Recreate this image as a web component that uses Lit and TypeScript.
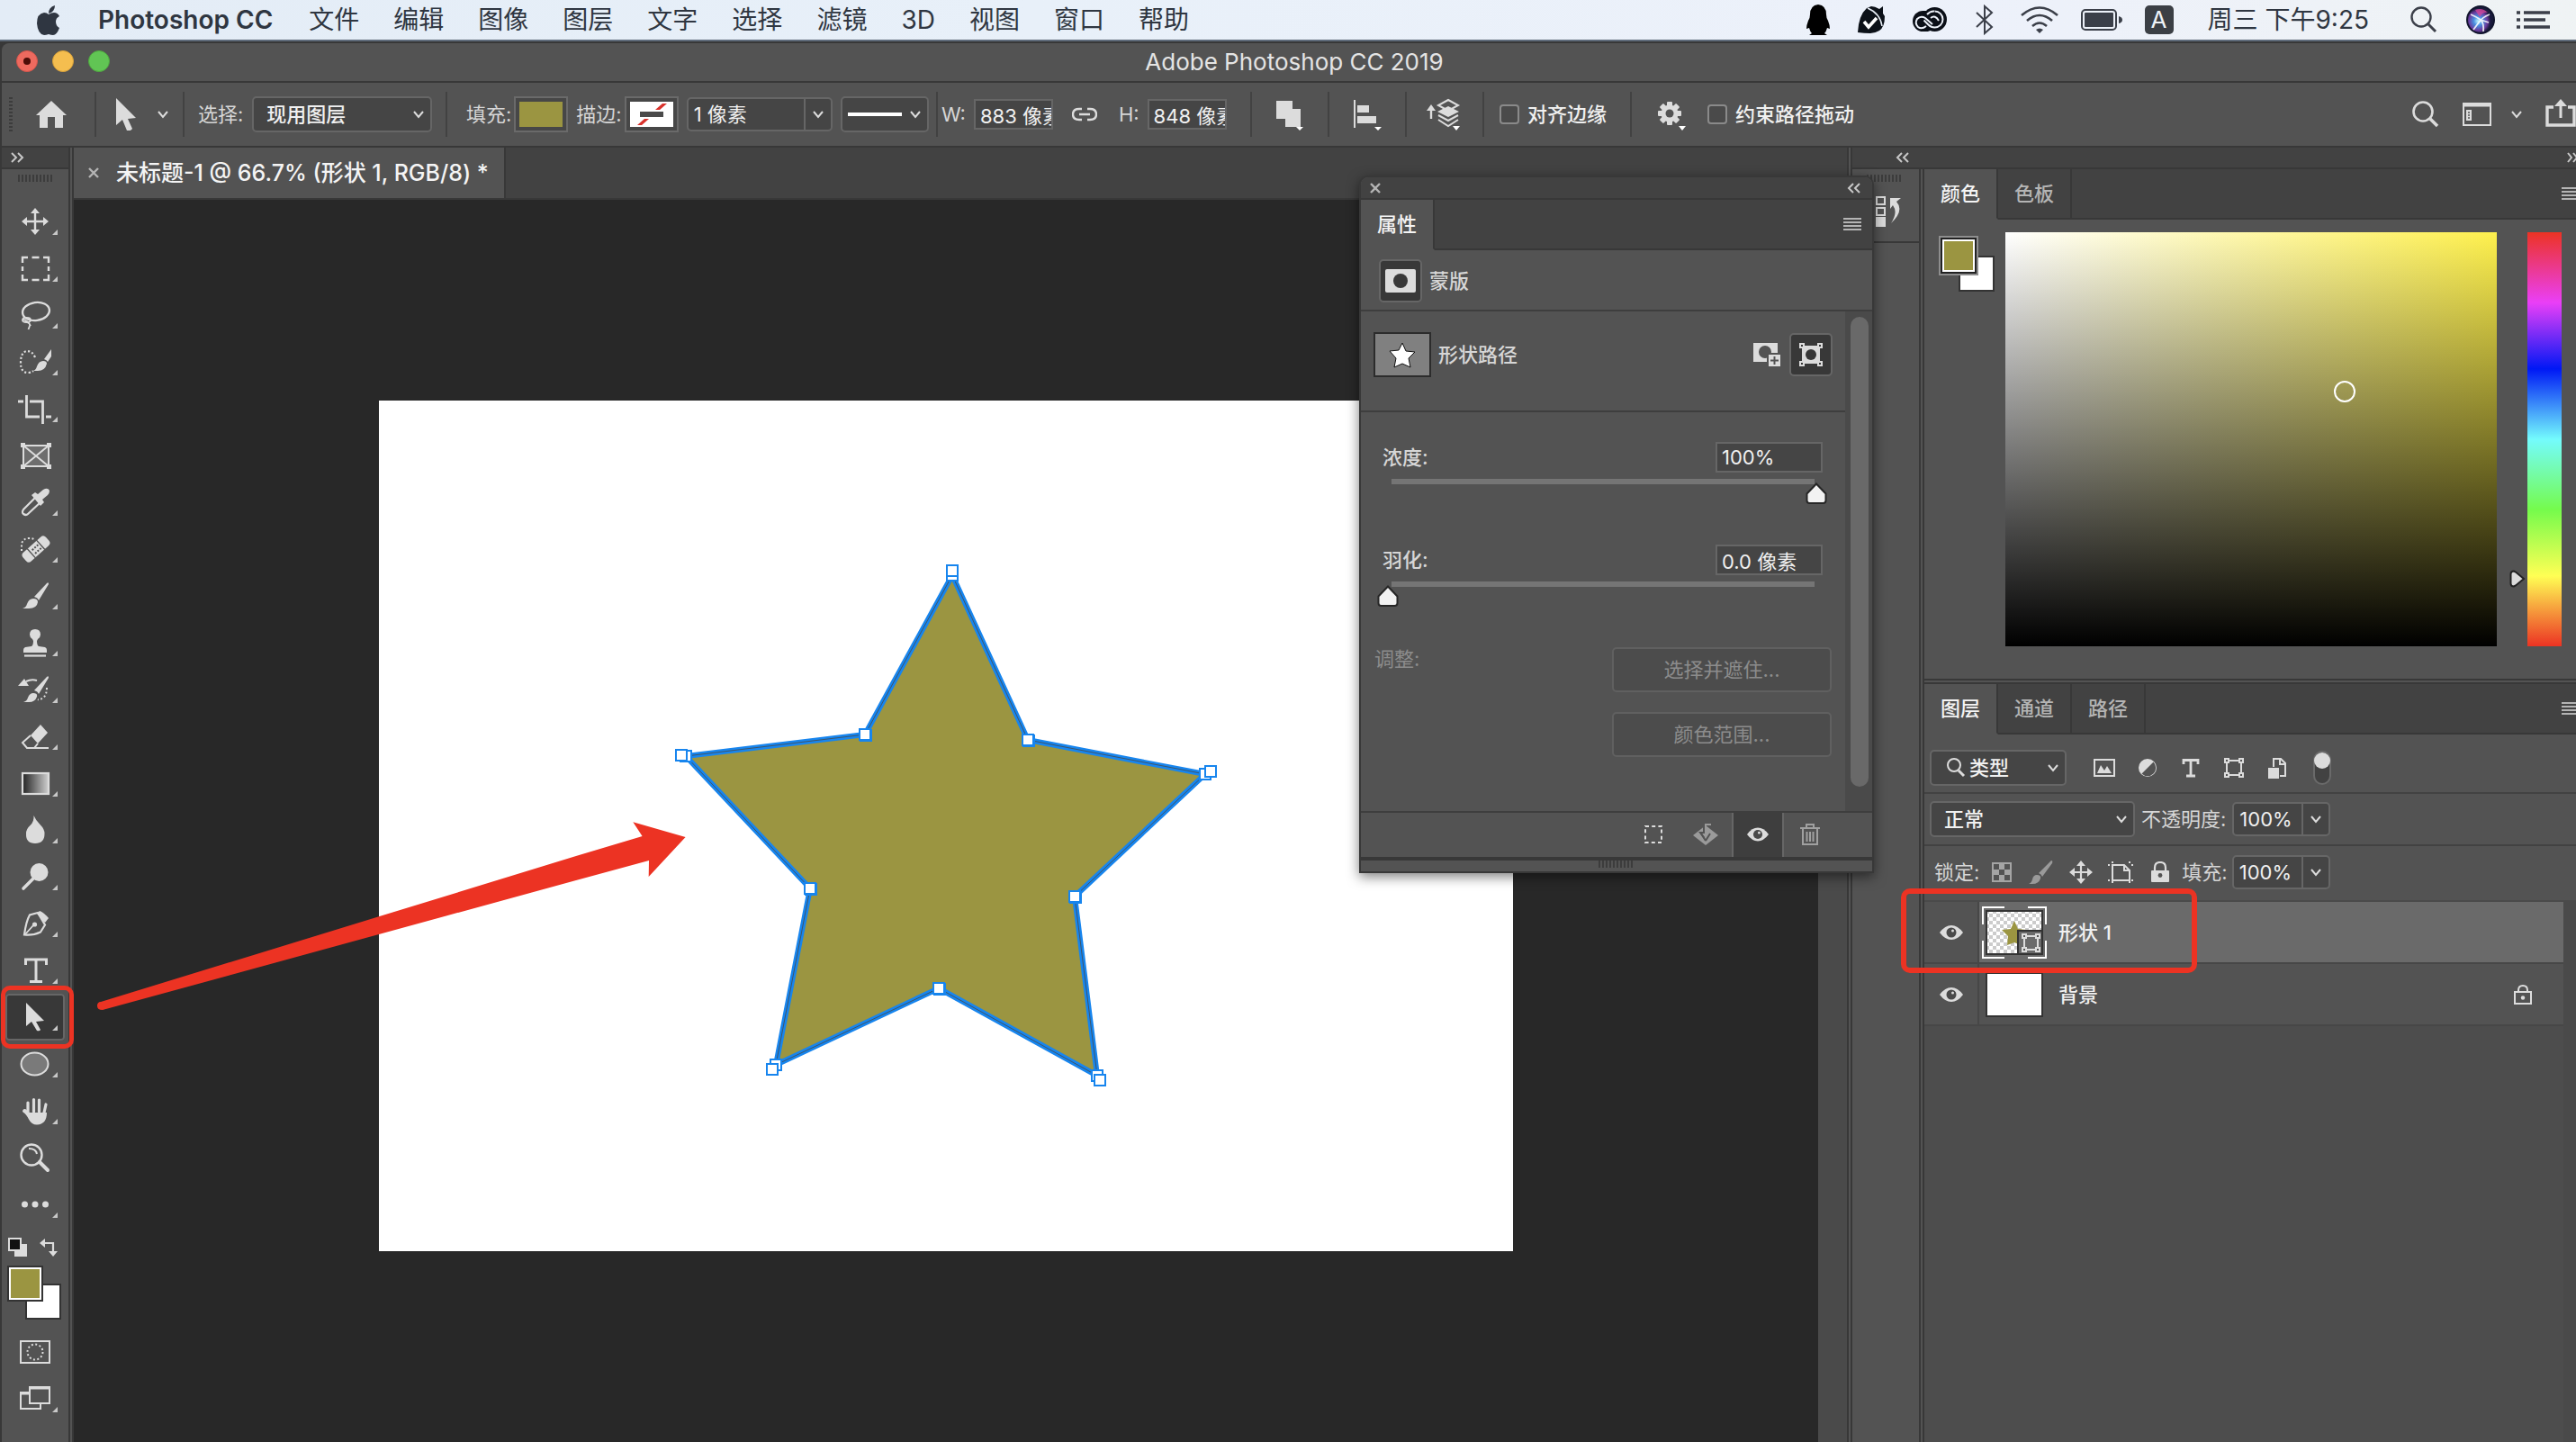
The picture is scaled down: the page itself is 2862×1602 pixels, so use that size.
import { LitElement, html, svg, css, TemplateResult, SVGTemplateResult } from "lit";
import { customElement, property, state } from "lit/decorators.js";
import { classMap } from "lit/directives/class-map.js";
import { styleMap } from "lit/directives/style-map.js";

const LIGHT = "#dcdcdc";

/** Wraps drawing content in an svg whose user units are screen pixels. */
const icon = (w: number, h: number, body: SVGTemplateResult): TemplateResult =>
  html`<svg width=${w} height=${h} viewBox="0 0 ${w} ${h}" fill="none" aria-hidden="true">${body}</svg>`;

const chevron = () => icon(14, 10, svg`<path d="M2 2l5 6 5-6" stroke="#dcdcdc" stroke-width="2"/>`);
const doubleRight = () => icon(16, 12, svg`<path d="M2 1l5 5-5 5M9 1l5 5-5 5" stroke="#c8c8c8" stroke-width="2"/>`);
const doubleLeft = () => icon(16, 12, svg`<path d="M7 1L2 6l5 5M14 1L9 6l5 5" stroke="#c8c8c8" stroke-width="2"/>`);
const closeX = () => icon(14, 14, svg`<path d="M2 2l10 10M12 2L2 12" stroke="#b4b4b4" stroke-width="2.4"/>`);
const burger = () => icon(20, 16, svg`<path d="M0 2h20M0 6h20M0 10h20M0 14h20" stroke="#b4b4b4" stroke-width="2"/>`);
const grip = (n: number, h = 8) =>
  icon(n * 4, h, svg`${Array.from({ length: n }, (_, i) => svg`<rect x=${i * 4} width="2" height=${h} fill="#3c3c3c"/>`)}`);

const cursorPath = "M0 0v30l7-6 5 12q4 1 6-2l-5-11 9-1z";

const moveIcon = svg`<path d="M33 15v22M22 26h22" stroke=${LIGHT} stroke-width="2.4"/>
  <path d="M33 11l5 6H28zM33 41l5-6H28zM18 26l6-5v10zM48 26l-6-5v10z" fill=${LIGHT}/>`;

const brushTip = svg`<path d="M19 40q4-1 5-5 2-6 7-6 5 0 5 4-1 7-10 7z" fill=${LIGHT}/>
  <path d="M32 27L46 12q2-2 2 1L37 31q-1-3-5-4z" fill=${LIGHT}/>`;

interface Tool {
  label: string;
  art: SVGTemplateResult;
  more: boolean;
}

const tools: Tool[] = [
  { label: "移动工具", more: true, art: moveIcon },
  {
    label: "矩形选框工具", more: true,
    art: svg`<path d="M19 20v-6h6M42 14h6v6M48 33v6h-6M25 39h-6v-6M29.500 14h8M29.500 39h8M19 24v5M48 24v5" stroke=${LIGHT} stroke-width="2.4"/>`,
  },
  {
    label: "套索工具", more: true,
    art: svg`<ellipse cx="34" cy="22" rx="15" ry="10" transform="rotate(-8 34 22)" stroke=${LIGHT} stroke-width="2.400"/>
      <ellipse cx="23.500" cy="31.500" rx="4.500" ry="2.500" stroke=${LIGHT} stroke-width="1.800"/>
      <path d="M20 31q8 3 7 7l-1.500 4M24 34q3 1 4 4" stroke=${LIGHT} stroke-width="1.800"/>`,
  },
  {
    label: "快速选择工具", more: true,
    art: svg`<path d="M33 21q-3-7-9-7-7 1-7 13 0 11 8 11 4 0 6-2" stroke=${LIGHT} stroke-width="2.200" stroke-dasharray="2.200 2.200"/>
      <path d="M31 36q3-1 4-5 2-6 7-6 4 0 4 3-2 8-10 8zM43 23l8-11v8l-4 6q-1-2-4-3z" fill=${LIGHT}/>`,
  },
  {
    label: "裁剪工具", more: true,
    art: svg`<path d="M14 18h6M23.500 11v24H38M45 35h6M27 18h14.500v25" stroke=${LIGHT} stroke-width="2.800"/>`,
  },
  {
    label: "图框工具", more: false,
    art: svg`<rect x="20" y="15" width="28" height="23" fill="#6e6e6e" stroke=${LIGHT} stroke-width="2"/>
      <path d="M20 15l28 23M48 15L20 38" stroke=${LIGHT} stroke-width="2"/>
      <path d="M17 12h5v5h-5zM46 12h5v5h-5zM17 36h5v5h-5zM46 36h5v5h-5z" fill=${LIGHT}/>`,
  },
  {
    label: "吸管工具", more: true,
    art: svg`<path d="M33 21L20 34q-2 3 0 5 3 2 5 0l14-13" stroke=${LIGHT} stroke-width="2.200"/>
      <path d="M29 18l4-3 3 2 6-5q5-3 7 1 0 3-2 5l-6 5 2 3-4 4z" fill=${LIGHT}/>`,
  },
  {
    label: "污点修复画笔工具", more: true,
    art: svg`<path d="M18 28v-8q2-6 8-6 5 0 7 2" stroke=${LIGHT} stroke-width="2" stroke-dasharray="2 2.400"/>
      <g transform="rotate(-42 34 26)"><rect x="17" y="19.500" width="34" height="13" rx="4" fill=${LIGHT}/>
      <path d="M27 19v14M41 19v14" stroke="#535353" stroke-width="1.400"/>
      <path d="M30 23h2v2h-2zM33.500 23h2v2h-2zM37 23h2v2h-2zM30 28h2v2h-2zM33.500 28h2v2h-2zM37 28h2v2h-2z" fill="#535353"/></g>`,
  },
  { label: "画笔工具", more: true, art: brushTip },
  {
    label: "仿制图章工具", more: true,
    art: svg`<path d="M27 17q0-6 6-6t6 6q0 3-3 5l-1 2q0 5 2 6l7 1q2 1 2 3v3H20v-3q0-2 2-3l7-1q2-1 2-6l-1-2q-3-2-3-5z" fill=${LIGHT}/>
      <path d="M21 40.500h24" stroke=${LIGHT} stroke-width="2.200"/>`,
  },
  {
    label: "历史记录画笔工具", more: true,
    art: svg`<path d="M23 17q6-3 12-1" stroke=${LIGHT} stroke-width="2"/>
      <path d="M14 22l7-8 5 8z" fill=${LIGHT}/>
      <path d="M20 40q4-1 5-5 2-5 6-5 5 0 4 4-2 6-9 6zM32 27L46 12q2-2 2 1L37 31q-1-3-5-4z" fill=${LIGHT}/>
      <path d="M46 24q0 8-4 11t-6 2" stroke=${LIGHT} stroke-width="2" stroke-dasharray="2 2.400"/>`,
  },
  {
    label: "橡皮擦工具", more: true,
    art: svg`<path d="M28 25L39 13l8 9-11 12z" fill=${LIGHT}/>
      <path d="M28 25l-9 8 5 6h8l4-5" stroke=${LIGHT} stroke-width="2"/><path d="M24 39h24" stroke=${LIGHT} stroke-width="2"/>`,
  },
  {
    label: "渐变工具", more: true,
    art: svg`<defs><linearGradient id="bw"><stop stop-color="#222"/><stop offset="1" stop-color="#d0d0d0"/></linearGradient></defs>
      <rect x="19" y="15" width="29" height="23" fill="url(#bw)" stroke=${LIGHT} stroke-width="2.200"/>`,
  },
  {
    label: "模糊工具", more: true,
    art: svg`<path d="M31.500 10q2 5 7 10 5 5 5 10 0 11-10.500 11T23 30q0-5 4.500-9t4-11z" fill=${LIGHT}/>`,
  },
  {
    label: "减淡工具", more: true,
    art: svg`<ellipse cx="37.500" cy="21" rx="10" ry="10" fill=${LIGHT}/><path d="M31 28L20 39" stroke=${LIGHT} stroke-width="3.600" stroke-linecap="round"/>`,
  },
  {
    label: "钢笔工具", more: true,
    art: svg`<path d="M36 14l-9 2.500q-4 7-6 22 10 1 18-3l5-8z" stroke=${LIGHT} stroke-width="2.200"/>
      <path d="M35 15l3-3q4 1 10 8l-4 5z" fill=${LIGHT}/><path d="M22 38l9-10" stroke=${LIGHT} stroke-width="1.800"/><circle cx="32.500" cy="27" r="2.600" fill=${LIGHT}/>`,
  },
  {
    label: "横排文字工具", more: true,
    art: svg`<path d="M22.500 20v-6h23v6M34 14v24M27 38.500h14" stroke=${LIGHT} stroke-width="3"/>`,
  },
  {
    label: "路径选择工具", more: true,
    art: svg`<path d="M23 10v26l6-5 6 10q3 1 4-1l-5-9 9-1z" fill=${LIGHT}/>`,
  },
  {
    label: "椭圆工具", more: true,
    art: svg`<ellipse cx="32.500" cy="26" rx="15" ry="12.500" fill="#7a7a7a" stroke=${LIGHT} stroke-width="2"/>`,
  },
  {
    label: "抓手工具", more: true,
    art: svg`<path d="M24 28V17M30.500 27V13.500M36.500 27V14M42 28l2-9" transform="translate(1 0)" stroke=${LIGHT} stroke-width="3.200" stroke-linecap="round"/>
      <path d="M19.500 25q2-2 4 0l3 3h19.500q0 13-11 13.500-6 0-9-6-3-6-6.500-8-1-1 0-2.500z" fill=${LIGHT}/>`,
  },
  {
    label: "缩放工具", more: false,
    art: svg`<circle cx="29" cy="23" r="11.500" stroke=${LIGHT} stroke-width="2.400"/><path d="M26 16q8 0 9 6" stroke=${LIGHT} stroke-width="2"/>
      <path d="M38 31l9 9" stroke=${LIGHT} stroke-width="4" stroke-linecap="round"/>`,
  },
  {
    label: "编辑工具栏", more: true,
    art: svg`<circle cx="21.500" cy="26" r="3.500" fill=${LIGHT}/><circle cx="33" cy="26" r="3.500" fill=${LIGHT}/><circle cx="44.500" cy="26" r="3.500" fill=${LIGHT}/>`,
  },
];

const moreMark = svg`<path d="M58 35v6h-6z" fill="#c8c8c8"/>`;

const menus = ["文件", "编辑", "图像", "图层", "文字", "选择", "滤镜", "3D", "视图", "窗口", "帮助"];

/* Anchor points of the star, in artboard pixels. Outer points also carry the position of their trailing handle. */
const starPoints: [number, number, number?, number?][] = [
  [637, 194, 637, 189],
  [721, 377],
  [918, 415, 924, 412],
  [773, 551],
  [798, 750, 801, 755],
  [622, 653],
  [441, 738, 437, 743],
  [479, 542],
  [341, 395, 336, 394],
  [540, 371],
];

const eye = (w = 26) =>
  html`<svg width=${w} height="16" viewBox="0 0 26 16" aria-hidden="true"><path d="M0 8q6-8 13-8t13 8q-6 8-13 8T0 8z" fill="#dcdcdc"/>
    <circle cx="13" cy="8" r="5.500" fill="#4a4a4a"/><circle cx="14.500" cy="6" r="1.500" fill="#dcdcdc"/></svg>`;

const frameShape = (x: number, y: number, w: number, h: number) => svg`
  <rect x=${x} y=${y} width=${w} height=${h} stroke=${LIGHT} stroke-width="2"/>
  ${[[x, y], [x + w, y], [x, y + h], [x + w, y + h]].map(
    ([cx, cy]) => svg`<rect x=${cx - 2} y=${cy - 2} width="4" height="4" fill="#535353" stroke=${LIGHT} stroke-width="2"/>`)}`;

const shared = css`
  * { box-sizing: border-box; }
  svg { display: block; flex: none; }
  button {
    font: inherit; color: inherit; background: none; border: 0; padding: 0; margin: 0;
    display: flex; align-items: center; justify-content: center; flex: none;
  }
  input, select { font: inherit; color: #f0f0f0; margin: 0; border-radius: 0; outline: 0; }
  .field { background: #454545; border: 2px solid #666; height: 34px; padding: 0 0 0 5px; min-width: 0; font-weight: 400; }
  .combo { display: flex; background: #454545; border: 2px solid #666; border-radius: 5px; height: 38px; }
  .combo input { background: none; border: 0; border-right: 2px solid #666; padding: 0 0 0 6px; min-width: 0; flex: 1; }
  .combo button { width: 28px; }
  .pick { display: grid; justify-content: stretch; background: #454545; border: 2px solid #666; border-radius: 5px; height: 40px; align-items: center; }
  .pick > * { grid-area: 1 / 1; }
  .pick select { appearance: none; background: none; border: 0; width: 100%; height: 100%; padding: 0 0 0 14px; font-weight: 500; }
  .pick > svg { pointer-events: none; }
  .pick .drop { justify-self: end; margin-right: 6px; }
  .tabs { display: flex; height: 56px; background: #424242; }
  .tabs .tab { width: 82px; border-right: 2px solid #383838; border-bottom: 2px solid #383838; color: #b4b4b4; font-weight: 500; }
  .tabs .tab.on { background: #535353; border-bottom-color: #535353; color: #f4f4f4; }
  .tabs .rest { flex: 1; display: flex; align-items: center; justify-content: flex-end; border-bottom: 2px solid #383838; }
`;

@customElement("mac-menubar")
export class MacMenubar extends LitElement {
  static styles = [shared, css`
    :host {
      display: flex; align-items: center; justify-content: space-between; height: 46px; padding: 0 28px 0 40px;
      background: linear-gradient(90deg, #e3ecf6, #e8f0f9 40%, #edf1fa 80%, #eff3f4); border-bottom: 2px solid #5f6b7a; color: #2f3641;
      font-size: 28px; line-height: 44px;
    }
    nav, .status { display: flex; align-items: center; }
    nav { gap: 38px; }
    a { color: inherit; text-decoration: none; }
    .app { font-weight: 600; margin: 0 2px 0 4px; }
    .ime { width: 32px; height: 32px; border-radius: 5px; background: #3b3f45; color: #eef2f6; line-height: 32px; text-align: center; font-size: 26px; }
    .icons { display: flex; align-items: center; gap: 24px; }
    .lens { margin-right: 8px; }
    .wide { gap: 31px; }
    .status { gap: 38px; }
    .clock { margin-right: 8px; }
    .mid { display: flex; align-items: center; gap: 25px; }
  `];

  render() {
    return html`
      <nav aria-label="菜单栏">
        ${icon(27, 34, svg`<path d="M21 0q0 7-7 9 0-7 7-9zM14 10q3-2 6-2 4 0 6 4-4 2-4 6 0 5 4 7-3 8-7 8-2 0-5-1-3 1-5 1-7-1-8-13 0-11 8-12 3 0 5 2z" fill="#2f3641" transform="translate(0 1)"/>`)}
        <a class="app" href="#app">Photoshop CC</a>
        ${menus.map((m) => html`<a href="#${m}">${m}</a>`)}
      </nav>
      <div class="status">
        <div class="mid">
          <div class="icons wide">
            ${icon(26, 34, svg`<path d="M13 0q9 1 9 11 0 4 2 7 2 5 2 9l-3-1q-1 4-3 6l3 2H3l3-2q-2-2-3-6l-3 1q0-4 2-9 2-3 2-7Q4 1 13 0z" fill="#000"/>`)}
            ${icon(30, 30, svg`<path d="M0 29Q1 10 10 2l5-2q4 0 9 3l4-3v8l2 3q0 12-6 16-5 3-10 3-7 0-14-1z" fill="#0c1118"/>
              <path d="M11 2q14 6 16 20" stroke="#e8eef6" stroke-width="1.600"/><path d="M7 17l5 6 9-10" stroke="#fff" stroke-width="3.600"/>`)}
            ${icon(38, 28, svg`<rect x="0" y="4" width="26" height="23" rx="11.500" fill="#0b0f17"/><circle cx="24.500" cy="13.500" r="13.500" fill="#0b0f17"/>
              <path d="M24.500 4.500a9 9 0 1 1 0 18q-4 0-7-3l-5-5M22 19l-8-7q-5-3-9 1-3 5 1 9 4 3 9-1M16 8q4-4 8-3.500" stroke="#eef2fa" stroke-width="2"/>
              <path d="M20 12q5-4 9 3" stroke="#eef2fa" stroke-width="2"/>`)}
          </div>
          ${icon(32, 34, svg`<path d="M8 9l17 16-8 7V2l8 7L8 25" stroke="#3b3f49" stroke-width="2"/>`)}
          ${icon(42, 30, svg`<path d="M1 10q20-17 40 0M7 16q14-12 28 0M13 22q8-7 16 0" stroke="#3b3f49" stroke-width="2.600"/><path d="M17 26q4-3 8 0l-4 4z" fill="#3b3f49"/>`)}
          ${icon(46, 24, svg`<rect x="1" y="1" width="38" height="22" rx="4" stroke="#3b3f49" stroke-width="2"/><rect x="4" y="4" width="32" height="16" rx="1" fill="#3b3f49"/><path d="M42 8q4 1 4 4t-4 4z" fill="#3b3f49"/>`)}
          <span class="ime">A</span>
        </div>
        <span class="clock">周三 下午9:25</span>
        <div class="icons">
          <button class="lens" aria-label="聚焦搜索">${icon(30, 30, svg`<circle cx="12" cy="12" r="10.500" stroke="#3b3f49" stroke-width="2.400"/><path d="M20 20l8 8" stroke="#3b3f49" stroke-width="3"/>`)}</button>
          ${icon(32, 32, svg`<defs><radialGradient id="siri" cx=".4" cy=".55"><stop stop-color="#bff6ff"/><stop offset=".35" stop-color="#4a8fe0"/><stop offset=".75" stop-color="#6a3a9c"/><stop offset="1" stop-color="#191a3c"/></radialGradient></defs>
            <circle cx="16" cy="16" r="16" fill="#10142c"/><circle cx="16" cy="16" r="14" fill="url(#siri)"/>
            <path d="M10 5q8-3 14 3-6-1-9 5z" fill="#d2479c" opacity=".8"/>
            <path d="M5 10q7 3 11 6 4 4 3 13M26 10q-8 3-12 9l-6 8M16 16l9 3" stroke="#fff" stroke-width="1.800" opacity=".85"/>`)}
          ${icon(38, 22, svg`<path d="M0 3h4M8 3h29M0 11h4M8 11h24M0 19h4M8 19h29" stroke="#3b3f49" stroke-width="3.400"/>`)}
        </div>
      </div>`;
  }
}

@customElement("options-bar")
export class OptionsBar extends LitElement {
  static styles = [shared, css`
    :host {
      display: grid; grid-template-columns: 105px 98px 292px 545px 349px 86px 86px 86px 164px auto 1fr;
      align-items: center; height: 72px; background: #535353; border-bottom: 2px solid #383838; color: #d6d6d6; font-size: 22px;
    }
    .group { display: flex; align-items: center; height: 50px; border-right: 2px solid #424242; white-space: nowrap; }
    .first { padding-left: 8px; gap: 26px; }
    .cursor { padding-left: 22px; gap: 23px; }
    .choose { padding-left: 15px; gap: 10px; }
    .choose .pick { width: 200px; }
    .fill { padding-left: 21px; gap: 9px; }
    .swatch { width: 60px; height: 40px; border: 2px solid #6a6a6a; background: #474747; margin-left: -6px; }
    .swatch i { width: 48px; height: 28px; background: #9b9541; }
    .fill .combo { width: 162px; }
    .line { width: 98px; }
    .line .stroke { margin-left: 6px; }
    .size { padding-left: 4px; gap: 9px; }
    .size .field { width: 88px; }
    .size button { width: 44px; margin: 0 7px 0 4px; }
    .center { justify-content: center; }
    .check { padding-left: 17px; gap: 9px; color: #f0f0f0; font-weight: 500; }
    .check label { display: flex; align-items: center; gap: 9px; }
    .check input { appearance: none; width: 22px; height: 22px; border: 2px solid #8a8a8a; border-radius: 4px; background: #4a4a4a; }
    .end { border: 0; gap: 22px; padding-left: 28px; }
    .right { justify-content: flex-end; gap: 25px; border: 0; }
    .right .space { gap: 20px; }
  `];

  render() {
    return html`
      <div class="group first">
        ${icon(4, 38, svg`<path d="M2 0v38" stroke="#3c3c3c" stroke-width="4" stroke-dasharray="2 2"/>`)}
        <button aria-label="主页">${icon(34, 30, svg`<path d="M17 0l17 16h-4v14h-9V18h-8v12H4V16H0z" fill=${LIGHT}/>`)}</button>
      </div>
      <div class="group cursor">
        ${icon(22, 36, svg`<path d=${cursorPath} fill=${LIGHT}/>`)}
        <button aria-label="工具预设">${chevron()}</button>
      </div>
      <div class="group choose">
        <label for="scope">选择:</label>
        <div class="pick"><select id="scope"><option>现用图层</option></select>
          <svg class="drop" width="14" height="10" viewBox="0 0 14 10" fill="none"><path d="M2 2l5 6 5-6" stroke="#dcdcdc" stroke-width="2"/></svg></div>
      </div>
      <div class="group fill">
        <span>填充:</span>
        <button class="swatch" aria-label="填充颜色"><i></i></button>
        <span>描边:</span>
        <button class="swatch" aria-label="描边颜色">${icon(48, 28, svg`<rect width="48" height="28" fill="#fff"/>
          <path d="M28 9l8-7h5l-8 7zM8 26l8-7h5l-8 7z" fill="#d9322c"/><rect x="11" y="11" width="26" height="6" fill="#4a4a4a"/>`)}</button>
        <div class="combo"><input aria-label="描边宽度" .value=${"1 像素"} /><button aria-label="宽度列表">${chevron()}</button></div>
        <button class="pick line" aria-label="描边类型">
          <svg class="stroke" width="60" height="4" viewBox="0 0 60 4"><rect width="60" height="4" fill="#fff"/></svg>
          <svg class="drop" width="14" height="10" viewBox="0 0 14 10" fill="none"><path d="M2 2l5 6 5-6" stroke="#dcdcdc" stroke-width="2"/></svg>
        </button>
      </div>
      <div class="group size">
        <label for="w">W:</label><input id="w" class="field" .value=${"883 像素"} />
        <button aria-label="链接宽高">${icon(28, 16, svg`<path d="M11 2H8Q1 2 1 8t7 6h3M17 2h3q7 0 7 6t-7 6h-3M8 8h12" stroke=${LIGHT} stroke-width="2.400"/>`)}</button>
        <label for="h">H:</label><input id="h" class="field" .value=${"848 像素"} />
      </div>
      <button class="group center" aria-label="路径操作">${icon(36, 36, svg`<path d="M3 3h18v9h9v20H13v-9H3z" fill=${LIGHT}/><path d="M25 32h8l-4 4z" fill="#fff"/>`)}</button>
      <button class="group center" aria-label="路径对齐方式">${icon(36, 36, svg`<path d="M4 2v31" stroke=${LIGHT} stroke-width="2"/><path d="M7 8h13v8H7zM7 20h21v8H7z" fill=${LIGHT}/><path d="M26 32h8l-4 4z" fill="#fff"/>`)}</button>
      <button class="group center" aria-label="路径排列方式">${icon(40, 36, svg`<path d="M5 23V12" stroke=${LIGHT} stroke-width="2.400"/><path d="M0 14l5-7 5 7z" fill=${LIGHT}/>
        <path d="M24 2l11 6-11 6-11-6z" stroke=${LIGHT} stroke-width="2"/><path d="M24 9l12 6-12 6-12-6z" fill=${LIGHT}/><path d="M13 19l11 6 11-6M13 24l11 7 11-7" stroke=${LIGHT} stroke-width="2"/><path d="M29 31h8l-4 5z" fill="#fff"/>`)}</button>
      <div class="group check"><label><input type="checkbox" />对齐边缘</label></div>
      <div class="group check end">
        <button aria-label="路径选项">${icon(34, 36, svg`<g transform="translate(14 17)"><g fill=${LIGHT}>
          ${[0, 45, 90, 135].map((a) => svg`<rect x="-3" y="-13" width="6" height="26" rx="1" transform="rotate(${a})"/>`)}<circle r="9.500"/></g><circle r="4.500" fill="#535353"/></g>
          <path d="M24 31h8l-4 5z" fill="#fff"/>`)}</button>
        <label><input type="checkbox" />约束路径拖动</label>
      </div>
      <div class="group right">
        <button aria-label="搜索">${icon(30, 30, svg`<circle cx="12" cy="12" r="10.500" stroke=${LIGHT} stroke-width="2.600"/><path d="M20 20l8 8" stroke=${LIGHT} stroke-width="3.600"/>`)}</button>
        <button class="space" aria-label="工作区">${icon(34, 28, svg`<rect x="2" y="2" width="30" height="24" stroke=${LIGHT} stroke-width="2"/><path d="M1 3.500h32" stroke=${LIGHT} stroke-width="4"/><rect x="5" y="9" width="6" height="12" fill=${LIGHT}/><path d="M7 12h2M7 15h2M7 18h2" stroke="#535353" stroke-width="1.600"/>`)}${chevron()}</button>
        <button aria-label="共享">${icon(34, 36, svg`<path d="M9 10H2v20h30V10h-7" stroke=${LIGHT} stroke-width="3.400"/><path d="M17 22V7" stroke=${LIGHT} stroke-width="3"/><path d="M10 9l7-8 7 8z" fill=${LIGHT}/>`)}</button>
      </div>`;
  }
}

@customElement("tool-strip")
export class ToolStrip extends LitElement {
  @state() private active = 17;

  static styles = [shared, css`
    :host { display: flex; flex-direction: column; width: 76px; background: #535353; border-right: 2px solid #383838; }
    .top { display: flex; align-items: center; height: 24px; padding-left: 9px; background: #424242; border-bottom: 2px solid #383838; }
    .grip { padding: 6px 0 18px 18px; }
    .list { display: flex; flex-direction: column; padding-left: 4px; }
    .tool { position: relative; width: 66px; height: 52px; border-radius: 4px; }
    .tool.on { background: #383838; box-shadow: inset 0 0 0 2px #666; }
    .mark { position: absolute; inset: -9px -10px -9px -5px; border: 5px solid #ec3323; border-radius: 10px; z-index: 4; }
    .chips { display: grid; grid-template-columns: 20px 20px 20px; grid-template-rows: 20px 20px 20px; margin: 0 0 10px 2px; }
    .chip { width: 40px; height: 40px; border: 2px solid #333; background: #fff; }
    .front { grid-area: 1 / 1; z-index: 1; background: #9b9541; box-shadow: inset 0 0 0 2px #fff; }
    .back { grid-area: 2 / 2; }
    .reset { height: 42px; width: 66px; display: flex; align-items: center; justify-content: space-between; padding: 2px 8px 0 3px; }
  `];

  render() {
    return html`
      <div class="top">${doubleRight()}</div>
      <div class="grip">${grip(10)}</div>
      <div class="list">
        ${tools.map((t, i) => html`
          <button class=${classMap({ tool: true, on: i === this.active })} aria-label=${t.label} @click=${() => (this.active = i)}>
            ${icon(66, 52, svg`${t.art}${t.more ? moreMark : ""}`)}
            ${i === 17 ? html`<span class="mark"></span>` : ""}
          </button>`)}
        <div class="reset">
          <button aria-label="默认前景色和背景色">${icon(22, 22, svg`<rect x="7" y="7" width="14" height="14" fill=${LIGHT}/><rect x="1" y="1" width="13" height="13" fill="#111" stroke=${LIGHT} stroke-width="2"/>`)}</button>
          <button aria-label="切换前景色和背景色">${icon(20, 22, svg`<path d="M4 6h11v11" stroke=${LIGHT} stroke-width="2.200"/><path d="M0 6l6-5v10zM15 21l5-6H10z" fill=${LIGHT}/>`)}</button>
        </div>
        <div class="chips">
          <button class="chip front" aria-label="前景色"></button>
          <button class="chip back" aria-label="背景色"></button>
        </div>
        <button class="tool" aria-label="以快速蒙版模式编辑">${icon(66, 52, svg`<rect x="17" y="14" width="32" height="24" stroke=${LIGHT} stroke-width="2"/><circle cx="33" cy="26" r="8.500" stroke=${LIGHT} stroke-width="2" stroke-dasharray="2 2.450"/>`)}</button>
        <button class="tool" aria-label="更改屏幕模式">${icon(66, 52, svg`<rect x="17" y="19" width="22" height="18" stroke=${LIGHT} stroke-width="2"/><rect x="27" y="13" width="22" height="18" fill="#535353" stroke=${LIGHT} stroke-width="2"/><path d="M26 14h24M16 20h10" stroke=${LIGHT} stroke-width="3"/>${moreMark}`)}</button>
      </div>`;
  }
}

@customElement("document-view")
export class DocumentView extends LitElement {
  static styles = [shared, css`
    :host { display: flex; flex-direction: column; flex: 1; min-width: 0; border-left: 2px solid #383838; border-right: 2px solid #383838; }
    .strip { display: flex; height: 58px; background: #424242; border-bottom: 2px solid #383838; }
    .doc { display: flex; align-items: center; gap: 18px; padding: 0 17px 0 15px; background: #535353; border-right: 2px solid #383838; color: #f4f4f4; font-size: 25px; font-weight: 500; white-space: nowrap; }
    .area { flex: 1; display: grid; grid-template-columns: 1fr 32px; background: #282828; }
    .stage { display: flex; align-items: center; justify-content: center; padding-top: 10px; overflow: hidden; }
    .board { width: 1260px; background: #fff; }
    .board svg { width: 100%; height: auto; }
    .scroll { background: #4a4a4a; }
  `];

  render() {
    const outline = starPoints.map(([x, y]) => `${x},${y}`).join(" ");
    const handle = (x: number, y: number) => svg`<rect x=${x - 6} y=${y - 6} width="12" height="12" fill="#fff" stroke="#1785ee" stroke-width="2"/>`;
    return html`
      <div class="strip">
        <div class="doc"><button aria-label="关闭">${closeX()}</button><span>未标题-1 @ 66.7% (形状 1, RGB/8) *</span></div>
      </div>
      <div class="area">
        <div class="stage">
          <div class="board">
            <svg viewBox="0 0 1260 945" role="img" aria-label="形状 1">
              <polygon points=${outline} fill="#9b9541" stroke="#1785ee" stroke-width="6" stroke-linejoin="bevel"/>
              <polygon points=${outline} fill="none" stroke="#3f5568" stroke-width="1"/>
              ${starPoints.map(([x, y, hx, hy]) => hx === undefined ? svg`${handle(x + 1, y + 1)}${handle(x, y)}` : svg`${handle(x, y)}${handle(hx, hy!)}`)}
            </svg>
          </div>
        </div>
        <div class="scroll"></div>
      </div>`;
  }
}

@customElement("value-slider")
export class ValueSlider extends LitElement {
  @property() label = "";
  @property() text = "";
  @property({ type: Number }) value = 0;

  static styles = [shared, css`
    :host { display: block; }
    .row { display: flex; justify-content: space-between; align-items: center; padding: 0 5px 0 6px; }
    .field { width: 119px; }
    .slide { position: relative; height: 28px; margin-top: 7px; }
    .rail { height: 6px; margin: 0 14px 0 16px; background: #757575; }
    input[type="range"] { position: absolute; inset: 0; width: 100%; height: 28px; opacity: 0; }
    .run { position: absolute; inset: 4px 12px 0 12px; pointer-events: none; }
    .knob { position: absolute; top: 0; transform: translateX(-50%); }
  `];

  render() {
    return html`
      <div class="row"><label for="v">${this.label}</label><input id="v" class="field" .value=${this.text} /></div>
      <div class="slide">
        <div class="rail"></div>
        <input type="range" aria-label=${this.label} .value=${String(this.value)} @input=${(e: Event) => (this.value = Number((e.target as HTMLInputElement).value))} />
        <div class="run"><div class="knob" style=${styleMap({ left: `${this.value}%` })}>
          ${icon(24, 24, svg`<path d="M12 1.500l10.500 11V20q0 3-3 3h-15q-3 0-3-3v-7.500z" fill="#f2f2f2" stroke="#262626" stroke-width="2"/>`)}
        </div></div>
      </div>`;
  }
}

@customElement("properties-panel")
export class PropertiesPanel extends LitElement {
  static styles = [shared, css`
    :host { display: block; width: 572px; border: 2px solid #383838; border-radius: 10px 10px 0 0; overflow: hidden; background: #535353; color: #d6d6d6; font-size: 22px; font-weight: 500; box-shadow: 0 4px 14px rgba(0, 0, 0, .5); }
    .bar { display: flex; align-items: center; justify-content: space-between; height: 25px; padding: 0 12px 0 9px; background: #424242; border-bottom: 2px solid #383838; }
    .rest { padding-right: 12px; }
    .mask { display: flex; align-items: center; gap: 8px; height: 68px; padding: 2px 0 0 20px; border-bottom: 2px solid #3e3e3e; }
    .square { width: 48px; height: 48px; border: 2px solid #666; border-radius: 5px; background: #383838; }
    .body { display: grid; grid-template-columns: 1fr 30px; height: 555px; }
    .scroll { background: #4a4a4a; padding: 6px 4px 0 6px; }
    .scroll i { display: block; height: 522px; border-radius: 10px; background: #696969; }
    .path { display: flex; align-items: center; gap: 8px; height: 112px; padding: 0 14px 14px 14px; border-bottom: 2px solid #3e3e3e; }
    .path .name { flex: 1; }
    .controls { display: flex; flex-direction: column; gap: 45px; padding: 33px 20px 0 18px; }
    .adjust { display: flex; justify-content: space-between; margin: 0 -5px 0 -3px; color: #8c8c8c; font-weight: 400; line-height: 26px; }
    .stack { display: flex; flex-direction: column; gap: 22px; }
    .stack button { width: 244px; height: 50px; border: 2px solid #606060; border-radius: 5px; background: #4c4c4c; color: #8c8c8c; }
    .foot { display: flex; justify-content: flex-end; height: 51px; padding-right: 40px; border-top: 2px solid #3e3e3e; }
    .foot button { width: 58px; height: 49px; padding-bottom: 2px; }
    .foot .on { background: #3e3e3e; border-left: 2px solid #666; border-right: 2px solid #666; }
    .edge { display: flex; justify-content: center; height: 16px; border-top: 4px solid #383838; }
  `];

  render() {
    return html`
      <div class="bar"><button aria-label="关闭">${closeX()}</button><button aria-label="折叠">${doubleLeft()}</button></div>
      <div class="tabs"><button class="tab on">属性</button><div class="rest"><button aria-label="面板菜单">${burger()}</button></div></div>
      <div class="mask">
        <button class="square" aria-label="蒙版">${icon(34, 26, svg`<rect width="34" height="26" rx="2" fill=${LIGHT}/><circle cx="17" cy="13" r="8" fill="#383838"/>`)}</button><span>蒙版</span>
      </div>
      <div class="body">
        <div>
          <div class="path">
            ${icon(64, 50, svg`<rect x="1" y="1" width="62" height="48" fill="#808080" stroke="#2c2c2c" stroke-width="2"/><path d="M32 12l4 9 10 1-7 7 2 10-9-4-9 4 2-10-7-8 10-1z" fill="#fff" stroke="#111"/>`)}
            <span class="name">形状路径</span>
            <button aria-label="添加像素蒙版">${icon(32, 28, svg`<path d="M0 1h27v13H16v8H0z" fill=${LIGHT}/><circle cx="13" cy="11" r="7" fill="#535353"/><rect x="15" y="12" width="16" height="15" fill="#535353"/><rect x="17" y="14" width="13" height="13" fill=${LIGHT}/><path d="M23.500 16v9M19 20.500h9" stroke="#535353" stroke-width="2"/>`)}</button>
            <button class="square" aria-label="选择形状路径">${icon(28, 28, svg`<path d="M4 4h20v20H4z" fill=${LIGHT}/><circle cx="14" cy="14" r="6" fill="#383838"/>
              ${[[2, 2], [22, 2], [2, 22], [22, 22]].map(([x, y]) => svg`<rect x=${x} y=${y} width="4" height="4" fill="#383838" stroke=${LIGHT} stroke-width="2"/>`)}`)}</button>
          </div>
          <div class="controls">
            <value-slider label="浓度:" text="100%" .value=${100}></value-slider>
            <value-slider label="羽化:" text="0.0 像素" .value=${0}></value-slider>
            <div class="adjust"><span>调整:</span><div class="stack"><button disabled>选择并遮住...</button><button disabled>颜色范围...</button></div></div>
          </div>
        </div>
        <div class="scroll"><i></i></div>
      </div>
      <div class="foot">
        <button aria-label="从蒙版中载入选区">${icon(20, 20, svg`<rect x="1" y="1" width="18" height="18" stroke=${LIGHT} stroke-width="2" stroke-dasharray="4 3.200"/>`)}</button>
        <button aria-label="应用蒙版">${icon(28, 24, svg`<path d="M14 2l14 11-14 11L0 13z" fill="#9a9a9a"/><path d="M14 18l-6-8h4V0h9" stroke="#535353" stroke-width="2"/><path d="M14 17V1h6" stroke="#9a9a9a" stroke-width="2"/><path d="M14 19l-5-8M14 19l5-8" stroke="#535353" stroke-width="2"/>`)}</button>
        <button class="on" aria-label="停用蒙版">${eye(24)}</button>
        <button aria-label="删除蒙版">${icon(22, 24, svg`<path d="M0 5h22M7 5V1h8v4M3 6v17h16V6M7.500 9v11M11 9v11M14.500 9v11" stroke="#a0a0a0" stroke-width="2"/>`)}</button>
      </div>
      <div class="edge">${grip(10)}</div>`;
  }
}

@customElement("color-panel")
export class ColorPanel extends LitElement {
  static styles = [shared, css`
    :host { display: flex; flex-direction: column; height: 568px; border-bottom: 2px solid #383838; background: #535353; }
    .body { display: grid; grid-template-columns: 74px 1fr 58px; padding: 14px 0 0 16px; height: 474px; }
    .tiles { display: grid; grid-template-columns: 22px 20px; grid-template-rows: 22px 22px; padding-top: 4px; align-content: start; }
    .tile { width: 40px; height: 40px; border: 2px solid #333; background: #fff; }
    .front { grid-area: 1 / 1; z-index: 1; width: 44px; height: 44px; border-color: #8e8e8e; background: #9b9541; box-shadow: inset 0 0 0 2px #222, inset 0 0 0 4px #fff; }
    .back { grid-area: 2 / 2; }
    .field2d { position: relative; background: linear-gradient(0deg, #000, transparent), linear-gradient(90deg, #fff, #fef04d); margin-right: 30px; }
    .dot { position: absolute; width: 24px; height: 24px; border: 2px solid #fff; border-radius: 50%; transform: translate(-50%, -50%); }
    .hue { position: relative; }
    .hue input { appearance: none; writing-mode: vertical-lr; width: 38px; height: 460px; margin: 0 0 0 4px; display: block;
      background: linear-gradient(#ec3323, #ea3ff7 17%, #0018f5 33%, #74fbfd 50%, #75fb4c 67%, #ffff54 83%, #ec3323); }
    .hue input::-webkit-slider-thumb { appearance: none; width: 38px; height: 2px; opacity: 0; }
    .mark { position: absolute; left: -16px; transform: translateY(-50%); }
  `];

  render() {
    return html`
      <div class="tabs"><button class="tab on">颜色</button><button class="tab">色板</button><div class="rest"><button aria-label="面板菜单">${icon(16, 16, svg`<path d="M0 2h16M0 6h16M0 10h16M0 14h16" stroke="#b4b4b4" stroke-width="2"/>`)}</button></div></div>
      <div class="body">
        <div class="tiles"><button class="tile front" aria-label="前景色"></button><button class="tile back" aria-label="背景色"></button></div>
        <div class="field2d"><span class="dot" style=${styleMap({ left: "69%", top: "38.5%" })}></span></div>
        <div class="hue">
          <input type="range" aria-label="色相" min="0" max="360" value="301" />
          <span class="mark" style=${styleMap({ top: "83.7%" })}>${icon(18, 20, svg`<path d="M5 1.500Q1.500 1.500 1.500 5v10q0 3.500 3.500 3.500l2-1 9-7.500-9-7.500z" fill=${LIGHT} stroke="#222" stroke-width="2"/>`)}</span>
        </div>
      </div>`;
  }
}

@customElement("layers-panel")
export class LayersPanel extends LitElement {
  static styles = [shared, css`
    :host { display: flex; flex-direction: column; flex: 1; background: #535353; border-top: 2px solid #383838; margin-top: 2px; color: #d6d6d6; }
    .row { display: flex; align-items: center; height: 58px; border-bottom: 2px solid #424242; padding: 0 6px; gap: 7px; white-space: nowrap; }
    .filter { height: 66px; padding-top: 9px; }
    .filter .pick { width: 152px; }
    .filter .pick select { padding-left: 42px; }
    .filter .pick .lens { margin-left: 16px; }
    .kinds { display: flex; align-items: center; gap: 23px; padding-left: 22px; }
    .kinds button { width: 25px; height: 26px; }
    .toggle { width: 20px; height: 38px; border: 2px solid #6a6a6a; border-radius: 10px; background: #424242; align-items: flex-start; margin-left: 21px; }
    .toggle i { width: 18px; height: 18px; border-radius: 9px; background: #dcdcdc; flex: none; }
    .blend .pick { width: 228px; }
    .combo { width: 109px; }
    .locks { height: 62px; border-bottom: 2px solid #4a4a4a; padding: 0 6px 3px 11px; gap: 5px; }
    .lockset { display: flex; align-items: center; gap: 16px; padding: 0 5px 0 6px; }
    .lockset button { width: 28px; height: 26px; }
    .list { flex: 1; display: grid; grid-template-columns: 1fr 14px; background: #4d4d4d; }
    .track { background: #4a4a4a; }
    ul { list-style: none; margin: 0; padding: 0; }
    li { position: relative; display: flex; height: 69px; border-bottom: 2px solid #474747; background: #535353; color: #f0f0f0; font-weight: 500; }
    .see { width: 61px; border-right: 2px solid #474747; }
    .layer { flex: 1; display: flex; align-items: center; gap: 13px; padding: 0 34px 0 3px; }
    .layer span { flex: 1; }
    li.on .layer { background: #6a6a6a; }
    .mark { position: absolute; left: -26px; top: -15px; width: 329px; height: 94px; border: 6px solid #ec3323; border-radius: 10px; z-index: 2; }
  `];

  render() {
    const lens = svg`<circle cx="9" cy="8" r="7" stroke="#dcdcdc" stroke-width="2"/><path d="M14 14l6 6" stroke="#dcdcdc" stroke-width="3"/>`;
    const drop = html`<svg class="drop" width="14" height="10" viewBox="0 0 14 10" fill="none"><path d="M2 2l5 6 5-6" stroke="#dcdcdc" stroke-width="2"/></svg>`;
    return html`
      <div class="tabs">
        <button class="tab on">图层</button><button class="tab">通道</button><button class="tab">路径</button>
        <div class="rest"><button aria-label="面板菜单">${icon(16, 16, svg`<path d="M0 2h16M0 6h16M0 10h16M0 14h16" stroke="#b4b4b4" stroke-width="2"/>`)}</button></div>
      </div>
      <div class="row filter">
        <div class="pick"><select aria-label="滤镜类型"><option>类型</option></select>
          <svg class="lens" width="22" height="22" viewBox="0 0 22 22" fill="none">${lens}</svg>${drop}</div>
        <div class="kinds">
          <button aria-label="像素图层滤镜">${icon(24, 22, svg`<rect x="1" y="2" width="22" height="18" stroke=${LIGHT} stroke-width="2"/><path d="M4 17l4-9 4 6 3-5 5 8z" fill=${LIGHT}/>`)}</button>
          <button aria-label="调整图层滤镜">${icon(22, 22, svg`<circle cx="11" cy="11" r="10" fill=${LIGHT}/><path d="M17.500 4.500L4.500 17.500A9 9 0 0 0 17.500 4.500z" transform="translate(0 0)" fill="#535353"/>`)}</button>
          <button aria-label="文字图层滤镜">${icon(20, 22, svg`<path d="M2 7V2.500h16V7M10 2v17M5 20h10" stroke=${LIGHT} stroke-width="2.800"/>`)}</button>
          <button aria-label="形状图层滤镜">${icon(24, 24, frameShape(4, 4, 16, 16))}</button>
          <button aria-label="智能对象滤镜">${icon(22, 24, svg`<path d="M7 11V2h8l5 5v14h-6" stroke=${LIGHT} stroke-width="2"/><path d="M14 2v6h6" stroke=${LIGHT} stroke-width="2"/><rect x="1" y="12" width="12" height="12" fill=${LIGHT}/>`)}</button>
        </div>
        <button class="toggle" aria-label="打开或关闭图层滤镜"><i></i></button>
      </div>
      <div class="row blend">
        <div class="pick"><select aria-label="混合模式"><option>正常</option></select>${drop}</div>
        <label for="op">不透明度:</label>
        <div class="combo"><input id="op" .value=${"100%"} /><button aria-label="不透明度滑块">${chevron()}</button></div>
      </div>
      <div class="row locks">
        <span>锁定:</span>
        <div class="lockset">
          <button aria-label="锁定透明像素">${icon(22, 22, svg`<rect width="22" height="22" fill="#a4a4a4"/><path d="M2 2h6v6H2zM14 2h6v6h-6zM8 8h6v6H8zM2 14h6v6H2zM14 14h6v6h-6z" fill="#535353"/>`)}</button>
          <button aria-label="锁定图像像素">${icon(28, 26, svg`<path d="M0 26q3-1 4-5 1-5 5-5 5 0 4 4-2 6-9 6zM11 14L25 0q2 0 1 3L15 18q-1-3-4-4z" fill="#9a9a9a"/>`)}</button>
          <button aria-label="锁定位置">${icon(26, 26, svg`<path d="M13 3v20M3 13h20" stroke=${LIGHT} stroke-width="2.200"/><path d="M13 0l5 6H8zM13 26l5-6H8zM0 13l6-5v10zM26 13l-6-5v10z" fill=${LIGHT}/>`)}</button>
          <button aria-label="防止画板自动嵌套">${icon(28, 24, svg`<path d="M5 4h13l6 6v11H5zM18 4v6h6" stroke=${LIGHT} stroke-width="2"/><path d="M0 4h2M26 4h2M0 21h2M26 21h2M5 0v2M24 0v2M5 22v2M24 22v2" stroke=${LIGHT} stroke-width="2"/>`)}</button>
          <button aria-label="锁定全部">${icon(20, 24, svg`<path d="M4 11V7q0-6 6-6t6 6v4" stroke=${LIGHT} stroke-width="2.200"/><rect y="10" width="20" height="13" rx="1" fill=${LIGHT}/><circle cx="10" cy="15.500" r="2.400" fill="#535353"/>`)}</button>
        </div>
        <label for="fl">填充:</label>
        <div class="combo"><input id="fl" .value=${"100%"} /><button aria-label="填充滑块">${chevron()}</button></div>
      </div>
      <div class="list">
        <ul>
          <li class="on">
            <button class="see" aria-label="隐藏形状 1">${eye()}</button>
            <div class="layer">
              ${icon(72, 58, svg`<defs><pattern id="check" width="8" height="8" patternUnits="userSpaceOnUse"><rect width="8" height="8" fill="#fff"/><path d="M0 0h4v4H0zM4 4h4v4H4z" fill="#ccc"/></pattern></defs>
                <path d="M1 20V1h24M51 1h20v19M71 38v19H51M25 57H1V38" stroke="#fff" stroke-width="2"/>
                <rect x="5" y="5" width="62" height="48" fill="url(#check)" stroke="#333" stroke-width="2"/>
                <path d="M36 16l4 9 9 1-6 8 2 10-9-4-8 3 1-10-7-7 10-1z" fill="#9b9541"/>
                <rect x="40" y="27" width="27" height="26" fill="#6a6a6a" stroke="#333" stroke-width="2"/>${frameShape(47, 33, 15, 15)}`)}
              <span>形状 1</span>
            </div>
            <div class="mark"></div>
          </li>
          <li>
            <button class="see" aria-label="隐藏背景">${eye()}</button>
            <div class="layer">
              ${icon(72, 58, svg`<rect x="5" y="5" width="62" height="48" fill="#fff" stroke="#333" stroke-width="2"/>`)}
              <span>背景</span>
              ${icon(22, 24, svg`<path d="M6 9V7q0-5 5-5t5 5v2" stroke=${LIGHT} stroke-width="2"/><rect x="2" y="9" width="18" height="13" stroke=${LIGHT} stroke-width="2"/><circle cx="11" cy="15.500" r="2.200" fill=${LIGHT}/>`)}
            </div>
          </li>
        </ul>
        <div class="track"></div>
      </div>`;
  }
}

@customElement("app-root")
export class AppRoot extends LitElement {
  static styles = [shared, css`
    :host { display: flex; flex-direction: column; min-height: 100vh; overflow: hidden; background: #383838; font-family: Inter, "Noto Sans CJK SC", sans-serif; font-size: 22px; line-height: 30px; }
    .window { flex: 1; display: flex; flex-direction: column; border: 2px solid #383838; border-width: 2px 0 0 2px; border-radius: 10px 0 0 0; }
    .title { position: relative; display: flex; align-items: center; justify-content: center; height: 44px; padding-left: 12px; background: #535353; border-bottom: 2px solid #383838; border-radius: 8px 0 0 0; color: #e4e4e4; font-size: 26px; }
    .lights { position: absolute; left: 16px; top: 8px; display: flex; gap: 16px; }
    .lights button { width: 24px; height: 24px; border-radius: 12px; background: #ee6a5f; border: 1px solid #d5554b; }
    .lights button:nth-child(2) { background: #f5be4f; border-color: #d8a13a; }
    .lights button:nth-child(3) { background: #61c554; border-color: #4ea73f; }
    .lights i { width: 8px; height: 8px; border-radius: 4px; background: #4d0d08; }
    .work { position: relative; flex: 1; display: flex; }
    .groove { width: 2px; background: #535353; }
    .side { display: grid; grid-template-columns: 76px 1fr; grid-template-rows: 24px 1fr; column-gap: 2px; width: 806px; background: #535353; border-left: 2px solid #383838; }
    .head { grid-column: 1 / 3; display: flex; align-items: center; justify-content: space-between; padding-left: 48px; background: #424242; border-bottom: 2px solid #383838; }
    .history { border-right: 2px solid #383838; }
    .history .slot { height: 82px; padding: 6px 0 0 16px; border-bottom: 2px solid #383838; }
    .history button { padding: 14px 0 0 3px; }
    .panels { display: flex; flex-direction: column; border-left: 2px solid #383838; }
    .float { position: absolute; top: 31px; right: 780px; z-index: 3; }
    .arrow { position: absolute; left: 104px; top: 748px; z-index: 2; pointer-events: none; }
  `];

  render() {
    return html`
      <mac-menubar></mac-menubar>
      <main class="window">
        <header class="title">
          <div class="lights"><button aria-label="关闭"><i></i></button><button aria-label="最小化"></button><button aria-label="缩放"></button></div>
          <span>Adobe Photoshop CC 2019</span>
        </header>
        <options-bar></options-bar>
        <div class="work">
          <tool-strip></tool-strip>
          <div class="groove"></div>
          <document-view></document-view>
          <div class="groove"></div>
          <aside class="side">
            <div class="head">${doubleLeft()}${icon(10, 12, svg`<path d="M1 1l4 5-4 5M7 1l4 5-4 5" stroke="#c8c8c8" stroke-width="2"/>`)}</div>
            <div class="history">
              <div class="slot">${grip(10)}
                <button aria-label="历史记录">${icon(36, 36, svg`<path d="M8 3h9v8H8zM8 15h9v8H8z" stroke=${LIGHT} stroke-width="2"/><rect x="7" y="25" width="11" height="11" fill=${LIGHT}/>
                  <path d="M23 4h12l-5 4q9 10-6 24 8-12 2-20l-3 4z" fill=${LIGHT}/>`)}</button>
              </div>
            </div>
            <div class="panels"><color-panel></color-panel><layers-panel></layers-panel></div>
          </aside>
          <properties-panel class="float"></properties-panel>
          <svg class="arrow" width="660" height="212" viewBox="106 912 660 212" aria-hidden="true">
            <path d="M112 1113L640 951 713.600 929 703.300 913.300 761.600 930 720.700 974 721 956 640 978 114 1122Q108 1122 108 1117.500T112 1113z" fill="#ec3323"/>
          </svg>
        </div>
      </main>`;
  }
}
